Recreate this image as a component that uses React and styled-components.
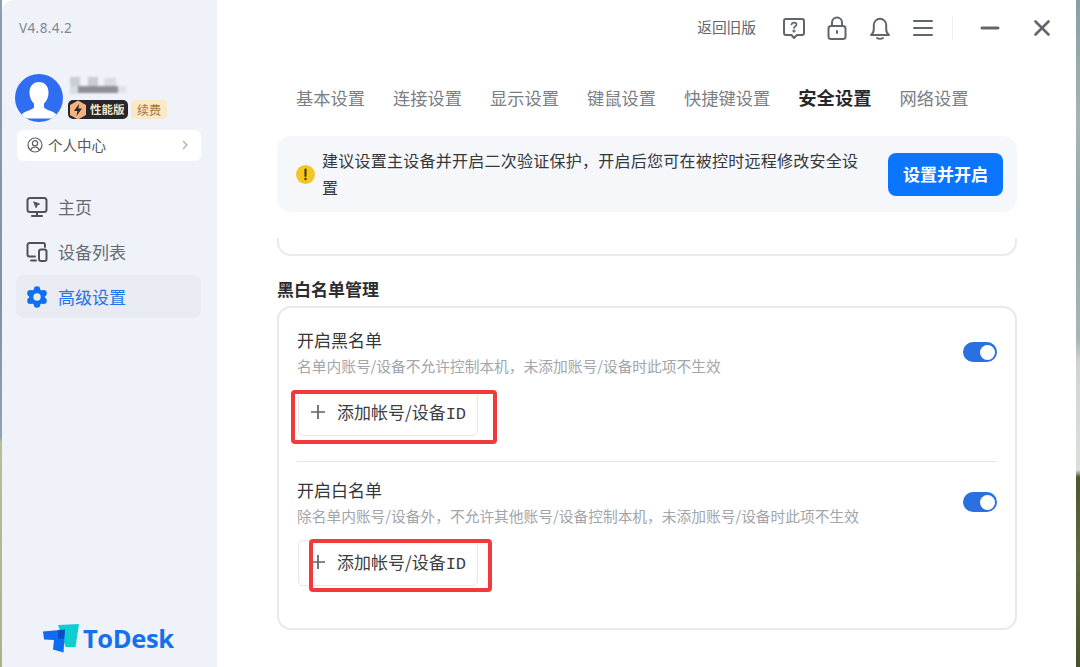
import React from "react";
import styled, { createGlobalStyle } from "styled-components";

const Global = createGlobalStyle`
  html, body { margin: 0; padding: 0; overflow: hidden; }
  body { font-family: "Noto Sans CJK SC", "Noto Sans", sans-serif; }
  * { box-sizing: border-box; }
`;

const Page = styled.div`
  width: 1080px;
  height: 667px;
  padding: 0 4px 0 2px;
  background:
    linear-gradient(180deg, #8b9eae 0, #7d92a8 300px, #8ea2b4 438px, #b6bf98 442px, #a8b488 667px) left top / 2px 100% no-repeat,
    linear-gradient(180deg, #86a0a4 0, #a6b4b4 120px, #94a9ac 220px, #a8b6b6 340px, #cfd4d2 362px, #dcdedc 470px, #4c5630 477px, #5f6c38 560px, #46502a 667px) right top / 4px 100% no-repeat;
`;
const Window = styled.div`
  display: flex;
  height: 100%;
  background: #fff;
  border-radius: 12px 16px 0 0;
  overflow: hidden;
`;
const Sidebar = styled.aside`
  width: 215px;
  flex: none;
  display: flex;
  flex-direction: column;
  background: #eff3f9;
  padding-top: 20px;
`;
const Version = styled.div`
  margin-left: 17px;
  font: 13.5px/16px "Noto Sans", sans-serif;
  letter-spacing: 0.4px;
  color: #7f8793;
`;
const Profile = styled.div`
  display: flex;
  margin: 38px 0 0 13px;
  gap: 5px;
`;
const AvatarSvg = styled.svg`
  width: 48px;
  height: 48px;
  flex: none;
`;
const ProfileInfo = styled.div`
  display: flex;
  flex-direction: column;
  padding-top: 3px;
`;
const BlurName = styled.div`
  width: 58px;
  height: 17px;
  filter: blur(1px);
  background:
    linear-gradient(#8d9197, #8d9197) 10px 9px / 40px 7px no-repeat,
    linear-gradient(#c9ccd1, #c9ccd1) 2px 0 / 10px 9px no-repeat,
    linear-gradient(#c9ccd1, #c9ccd1) 20px 0 / 10px 9px no-repeat,
    linear-gradient(#d8dbdf, #d8dbdf) 36px 1px / 12px 8px no-repeat,
    linear-gradient(#d8dbdf, #d8dbdf) 2px 9px / 8px 8px no-repeat,
    linear-gradient(#dfe2e6, #dfe2e6) 50px 9px / 8px 7px no-repeat;
`;
const Badges = styled.div`
  display: flex;
  gap: 3px;
  margin-top: 6px;
`;
const VipBadge = styled.div`
  display: flex;
  align-items: center;
  width: 60px;
  height: 19px;
  border-radius: 5px;
  background: #26262c;
  color: #f3e2c6;
  font-size: 11.5px;
  font-weight: 700;
  line-height: 19px;
  gap: 2px;
  white-space: nowrap;
`;
const HexSvg = styled.svg`
  width: 20px;
  height: 20px;
  flex: none;
`;
const RenewBadge = styled.div`
  width: 36px;
  height: 19px;
  border-radius: 4px;
  background: #fbe8c4;
  color: #a3783a;
  font-size: 12px;
  line-height: 19px;
  text-align: center;
`;
const PersonCard = styled.div`
  display: flex;
  align-items: center;
  width: 184px;
  height: 31px;
  margin: 8px 0 0 15px;
  padding: 0 12px 2px 10px;
  gap: 5px;
  background: #fff;
  border-radius: 6px;
  color: #555a60;
  font-size: 14.5px;
`;
const PersonLabel = styled.span`
  flex: 1;
`;
const Nav = styled.nav`
  display: flex;
  flex-direction: column;
  gap: 2px;
  margin: 24px 0 0 14px;
  width: 185px;
`;
const NavItem = styled.div`
  display: flex;
  align-items: center;
  height: 43px;
  padding-left: 10px;
  gap: 10px;
  border-radius: 8px;
  font-size: 17px;
  color: ${(p) => (p.$active ? "#1e74e8" : "#666b72")};
  background: ${(p) => (p.$active ? "#e8ebf1" : "transparent")};
`;
const Logo = styled.div`
  margin-top: auto;
  display: flex;
  align-items: center;
  gap: 4px;
  padding: 0 0 14px 40px;
`;
const LogoText = styled.span`
  font: 700 25.5px/30px "Open Sans", sans-serif;
  letter-spacing: -0.4px;
  color: #1670ee;
`;
const Main = styled.main`
  flex: 1;
  min-width: 0;
  display: flex;
  flex-direction: column;
  padding: 0 59px 0 60px;
`;
const TopBar = styled.header`
  display: flex;
  align-items: center;
  justify-content: flex-end;
  height: 56px;
  margin-right: -59px;
  padding-right: 24px;
  color: #62666c;
`;
const OldLink = styled.span`
  font-size: 14.7px;
  line-height: 20px;
  padding-bottom: 2px;
  color: #62666c;
  margin-right: 26px;
`;
const ToolIcons = styled.div`
  display: flex;
  gap: 19px;
`;
const VDivider = styled.div`
  width: 1px;
  height: 24px;
  background: #eceef0;
  margin: 0 27px 0 17px;
`;
const WinButtons = styled.div`
  display: flex;
  gap: 32px;
`;
const Tabs = styled.div`
  display: flex;
  align-items: center;
  gap: 28px;
  height: 30px;
  margin-top: 26px;
  padding-left: 19px;
`;
const Tab = styled.span`
  font-size: ${(p) => (p.$active ? "18.3px" : "17.25px")};
  font-weight: ${(p) => (p.$active ? 700 : 400)};
  color: ${(p) => (p.$active ? "#26282b" : "#7b7e83")};
  white-space: nowrap;
`;
const Notice = styled.div`
  display: flex;
  align-items: center;
  height: 76px;
  margin-top: 24px;
  padding: 0 14px 0 19px;
  background: #f6f7fa;
  border-radius: 14px;
`;
const WarnSvg = styled.svg`
  width: 19px;
  height: 19px;
  flex: none;
  margin-right: 7px;
`;
const NoticeText = styled.p`
  margin: 0;
  width: 540px;
  font-size: 16px;
  line-height: 27px;
  letter-spacing: 0.25px;
  color: #34373b;
`;
const PrimaryButton = styled.button`
  margin-left: auto;
  width: 115px;
  height: 43px;
  padding: 0 0 2px;
  border: 0;
  border-radius: 8px;
  background: #0a76ff;
  color: #fff;
  font-family: inherit;
  font-size: 17px;
  font-weight: 700;
`;
const StubCard = styled.div`
  height: 18px;
  margin-top: 26px;
  border: 2px solid #e9eaec;
  border-top: 0;
  border-radius: 0 0 14px 14px;
`;
const SectionTitle = styled.h2`
  margin: 22px 0 0;
  font-size: 17px;
  line-height: 22px;
  font-weight: 700;
  color: #2a2c30;
`;
const Card = styled.section`
  height: 324px;
  margin-top: 6px;
  padding: 20px 18px 0;
  border: 2px solid #e8e9eb;
  border-radius: 14px;
`;
const RowHead = styled.div`
  display: flex;
  align-items: center;
  justify-content: space-between;
`;
const RowTitle = styled.div`
  font-size: 17px;
  line-height: 24px;
  color: #33363a;
`;
const RowDesc = styled.div`
  margin-top: 4px;
  font-size: 14.73px;
  line-height: 20px;
  color: #a2a5aa;
`;
const Toggle = styled.div`
  display: flex;
  justify-content: flex-end;
  align-items: center;
  width: 34px;
  height: 20px;
  padding-right: 2px;
  border-radius: 10px;
  background: #2a70e0;
`;
const Knob = styled.div`
  width: 15px;
  height: 15px;
  border-radius: 50%;
  background: #fff;
`;
const ButtonWrap = styled.div`
  position: relative;
  width: 180px;
  height: 46px;
  margin: 14px 0 0 1px;
`;
const AddButton = styled.button`
  display: flex;
  align-items: center;
  width: 100%;
  height: 100%;
  padding: 0 0 3px 12px;
  gap: 12px;
  background: #fff;
  border: 1.5px solid #e6e7e9;
  border-radius: 5px;
  font-family: inherit;
  font-size: 17px;
  color: #3a3d41;
  white-space: nowrap;
`;
const Latin = styled.span`
  font-family: "Liberation Mono", monospace;
  font-size: 17px;
`;
const RedFrame = styled.div`
  position: absolute;
  left: ${(p) => p.$l}px;
  top: ${(p) => p.$t}px;
  width: ${(p) => p.$w}px;
  height: ${(p) => p.$h}px;
  border: 4.5px solid #f2393c;
  border-radius: 4px;
  pointer-events: none;
`;
const Rule = styled.hr`
  height: 1px;
  margin: 25px 0 16px;
  border: 0;
  background: #e3e4e6;
`;

const Line = { fill: "none", stroke: "currentColor", strokeWidth: 2, strokeLinecap: "round", strokeLinejoin: "round" };

const Avatar = () => (
  <AvatarSvg viewBox="0 0 48 48">
    <defs>
      <clipPath id="av"><circle cx="24" cy="24" r="24" /></clipPath>
    </defs>
    <circle cx="24" cy="24" r="24" fill="#2f6ef0" />
    <g clipPath="url(#av)" fill="#fff">
      <path d="M24 8c6 0 9.500 4.500 9.500 10.500 0 4.500-2 9-4.500 11v3.500c0 2 6 3.500 10 5.500 2 1 3 3 3 6H6c0-3 1-5 3-6 4-2 10-3.500 10-5.500v-3.500c-2.500-2-4.500-6.500-4.500-11C14.500 12.500 18 8 24 8z" />
    </g>
  </AvatarSvg>
);

const Hex = () => (
  <HexSvg viewBox="0 0 20 20">
    <path d="M10 0.500l8 4.500v10l-8 4.500-8-4.500V5z" fill="#f2b380" />
    <path d="M11 4L6 11h3.500L8.500 16l5.500-7.500h-3.500z" fill="#26262c" />
  </HexSvg>
);

const UserIcon = () => (
  <svg width="16" height="16" viewBox="0 0 16 16" {...Line} strokeWidth="1.200" color="#5c6066">
    <circle cx="8" cy="8" r="7" />
    <circle cx="8" cy="6.300" r="2.600" />
    <path d="M3.500 13c1-2 2.500-3 4.500-3s3.500 1 4.500 3" />
  </svg>
);
const Chevron = () => (
  <svg width="8" height="10" viewBox="0 0 8 10" {...Line} strokeWidth="1.200" color="#a9adb3">
    <path d="M2.500 1.500L6 5 2.500 8.500" />
  </svg>
);
const HomeIcon = () => (
  <svg width="22" height="22" viewBox="0 0 22 22" {...Line} color="#4f5358">
    <rect x="1.500" y="2" width="19" height="14" rx="2.500" />
    <path d="M11 16v3M6 20h10" />
    <path d="M8 6l5.500 2-2.300 1 -1 2.300z" fill="currentColor" strokeWidth="1" />
  </svg>
);
const DevicesIcon = () => (
  <svg width="22" height="22" viewBox="0 0 22 22" {...Line} color="#4f5358">
    <path d="M9 15.500H3.500a2 2 0 0 1-2-2V4a2 2 0 0 1 2-2H17a2 2 0 0 1 2 2v2" />
    <rect x="13" y="8.500" width="7.500" height="11.500" rx="2" />
    <path d="M5 19.500h5" />
  </svg>
);
const lobes = [0, 60, 120, 180, 240, 300].map((a) => ({
  a,
  x: 11 + 7.6 * Math.cos(((a + 30) * Math.PI) / 180),
  y: 11 + 7.6 * Math.sin(((a + 30) * Math.PI) / 180),
}));
const GearIcon = () => (
  <svg width="22" height="22" viewBox="0 0 22 22">
    <circle cx="11" cy="11" r="8" fill="#0f6ff0" />
    {lobes.map((l) => (
      <circle key={l.a} cx={l.x} cy={l.y} r="3.200" fill="#0f6ff0" />
    ))}
    <circle cx="11" cy="11" r="3.700" fill="#e8ebf1" />
  </svg>
);
const LogoMark = () => (
  <svg width="37" height="29" viewBox="0 0 37 29">
    <path d="M16 1l21-1-3.500 23-10 0z" fill="#12cdd0" />
    <path d="M1 7.500l22-2-1.500 23-10.500-3 1-9.500-10-.5z" fill="#0d6cf2" />
    <path d="M16 6.200l7-.7-1 9-6 .3z" fill="#0a4fc0" />
  </svg>
);
const HelpIcon = () => (
  <svg width="24" height="24" viewBox="0 0 24 24" {...Line}>
    <path d="M4 3h16a2 2 0 0 1 2 2v12a2 2 0 0 1-2 2h-5l-3 3-2.500-3H4a2 2 0 0 1-2-2V5a2 2 0 0 1 2-2z" />
    <path d="M9.500 8.500c.3-1.200 1.300-1.800 2.500-1.800 1.400 0 2.500.8 2.500 2 0 1.800-2.500 1.800-2.500 3.300" strokeWidth="1.700" />
    <circle cx="12" cy="15" r=".6" fill="currentColor" />
  </svg>
);
const LockIcon = () => (
  <svg width="24" height="24" viewBox="0 0 24 24" {...Line}>
    <rect x="3.500" y="10" width="17" height="13" rx="2.500" />
    <path d="M7 10V6.500a5 5 0 0 1 10 0V10" />
    <path d="M12 15v2" />
  </svg>
);
const BellIcon = () => (
  <svg width="24" height="24" viewBox="0 0 24 24" {...Line}>
    <path d="M3 19c2-1.500 2.800-3.500 2.800-6V9a6.200 6.200 0 0 1 12.400 0v4c0 2.500.8 4.500 2.800 6z" />
    <path d="M9 22c1.500 1 4.500 1 6 0" />
  </svg>
);
const MenuIcon = () => (
  <svg width="24" height="24" viewBox="0 0 24 24" {...Line}>
    <path d="M3 5h18M3 12h18M3 19h18" />
  </svg>
);
const MinIcon = () => (
  <svg width="20" height="20" viewBox="0 0 20 20" {...Line} strokeWidth="3">
    <path d="M2 10h16" />
  </svg>
);
const CloseIcon = () => (
  <svg width="20" height="20" viewBox="0 0 20 20" {...Line} strokeWidth="2.600">
    <path d="M3.500 3.500l13 13M16.500 3.500l-13 13" />
  </svg>
);
const Warn = () => (
  <WarnSvg viewBox="0 0 19 19">
    <circle cx="9.500" cy="9.500" r="9.500" fill="#f3c623" />
    <path d="M9.500 4.500v6.500" stroke="#3a3000" strokeWidth="2" strokeLinecap="round" />
    <circle cx="9.500" cy="14" r="1.200" fill="#3a3000" />
  </WarnSvg>
);
const Plus = () => (
  <svg width="14" height="14" viewBox="0 0 14 14" fill="none" stroke="#5f6267" strokeWidth="1.700">
    <path d="M7 0v14M0 7h14" />
  </svg>
);

const tabs = ["基本设置", "连接设置", "显示设置", "键鼠设置", "快捷键设置", "安全设置", "网络设置"];

const ListRow = ({ title, desc, frame }) => (
  <>
    <RowHead>
      <div>
        <RowTitle>{title}</RowTitle>
        <RowDesc>{desc}</RowDesc>
      </div>
      <Toggle><Knob /></Toggle>
    </RowHead>
    <ButtonWrap>
      <AddButton><Plus /><span>添加帐号/设备<Latin>ID</Latin></span></AddButton>
      <RedFrame $l={frame.l} $t={frame.t} $w={frame.w} $h={frame.h} />
    </ButtonWrap>
  </>
);

export default function App() {
  return (
    <Page>
      <Global />
      <Window>
        <Sidebar>
          <Version>V4.8.4.2</Version>
          <Profile>
            <Avatar />
            <ProfileInfo>
              <BlurName />
              <Badges>
                <VipBadge><Hex />性能版</VipBadge>
                <RenewBadge>续费</RenewBadge>
              </Badges>
            </ProfileInfo>
          </Profile>
          <PersonCard>
            <UserIcon />
            <PersonLabel>个人中心</PersonLabel>
            <Chevron />
          </PersonCard>
          <Nav>
            <NavItem><HomeIcon />主页</NavItem>
            <NavItem><DevicesIcon />设备列表</NavItem>
            <NavItem $active><GearIcon />高级设置</NavItem>
          </Nav>
          <Logo>
            <LogoMark />
            <LogoText>ToDesk</LogoText>
          </Logo>
        </Sidebar>
        <Main>
          <TopBar>
            <OldLink>返回旧版</OldLink>
            <ToolIcons>
              <HelpIcon />
              <LockIcon />
              <BellIcon />
              <MenuIcon />
            </ToolIcons>
            <VDivider />
            <WinButtons>
              <MinIcon />
              <CloseIcon />
            </WinButtons>
          </TopBar>
          <Tabs>
            {tabs.map((t) => (
              <Tab key={t} $active={t === "安全设置"}>{t}</Tab>
            ))}
          </Tabs>
          <Notice>
            <Warn />
            <NoticeText>建议设置主设备并开启二次验证保护，开启后您可在被控时远程修改安全设置</NoticeText>
            <PrimaryButton>设置并开启</PrimaryButton>
          </Notice>
          <StubCard />
          <SectionTitle>黑白名单管理</SectionTitle>
          <Card>
            <ListRow
              title="开启黑名单"
              desc="名单内账号/设备不允许控制本机，未添加账号/设备时此项不生效"
              frame={{ l: -7, t: 0, w: 206, h: 54 }}
            />
            <Rule />
            <ListRow
              title="开启白名单"
              desc="除名单内账号/设备外，不允许其他账号/设备控制本机，未添加账号/设备时此项不生效"
              frame={{ l: 11, t: -1, w: 183, h: 53 }}
            />
          </Card>
        </Main>
      </Window>
    </Page>
  );
}
